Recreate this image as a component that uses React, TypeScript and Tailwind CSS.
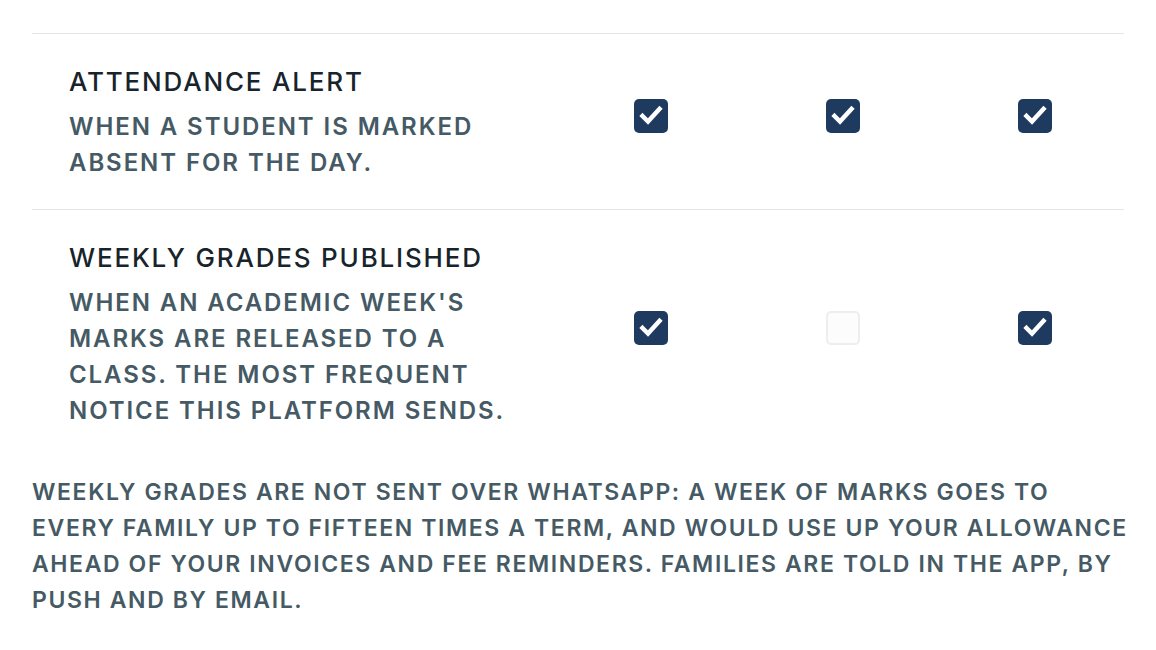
import React from "react";

type Pref = { title: string; desc: string; channels: boolean[] };

const prefs: Pref[] = [
  {
    title: "Attendance alert",
    desc: "When a student is marked absent for the day.",
    channels: [true, true, true],
  },
  {
    title: "Weekly grades published",
    desc: "When an academic week's marks are released to a class. The most frequent notice this platform sends.",
    channels: [true, false, true],
  },
];

function Box({ checked }: { checked: boolean }) {
  if (!checked) {
    return <span className="block w-[34px] h-[34px] rounded-[5px] border-2 border-[#eceeef] bg-[#fcfcfc]" />;
  }
  return (
    <span className="flex items-center justify-center w-[34px] h-[34px] rounded-[5px] bg-[#1f3a5f]">
      <svg width="34" height="34" viewBox="0 0 34 34">
        <polyline points="8.5,17 14,22.5 25.5,10" fill="none" stroke="white" strokeWidth="4.5" strokeLinecap="square" />
      </svg>
    </span>
  );
}

export default function App() {
  return (
    <div className="min-h-screen bg-white px-8 pt-[33px] font-['Inter',sans-serif] uppercase">
      {prefs.map(p => (
        <div
          key={p.title}
          className="grid grid-cols-[1fr_178px_178px_178px] gap-x-[14px] border-t border-[#e1e6e9] py-[28px]"
        >
          <div className="pl-[37px] pr-[30px]">
            <div className="text-[26px] leading-[40px] tracking-[0.07em] font-medium text-[#17242c]">{p.title}</div>
            <div className="mt-[7px] text-[24px] leading-[36px] tracking-[0.08em] font-semibold text-[#455a64]">{p.desc}</div>
          </div>
          {p.channels.map((c, i) => (
            <div key={i} className="flex items-center justify-center pb-[11px]">
              <Box checked={c} />
            </div>
          ))}
        </div>
      ))}
      <p className="mt-[17px] -mr-[8px] text-[23px] leading-[36px] tracking-[0.07em] font-semibold text-[#455a64]">
        Weekly grades are not sent over WhatsApp: a week of marks goes to every family up to fifteen times a term, and
        would use up your allowance ahead of your invoices and fee reminders. Families are told in the app, by push and
        by email.
      </p>
    </div>
  );
}
